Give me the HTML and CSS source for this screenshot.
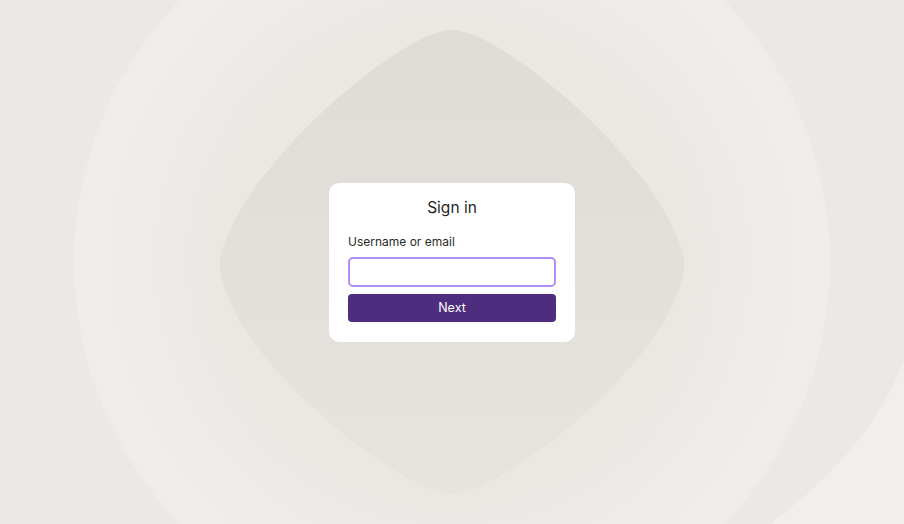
FILE: index.html
```html
<!DOCTYPE html>
<html lang="en">
<head>
    <meta charset="UTF-8">
    <meta name="viewport" content="width=device-width, initial-scale=1.0">
    <title>Sign in</title>
    <link rel="stylesheet" href="styles.css">
</head>
<body>
    <svg class="backdrop" viewBox="0 0 904 524" preserveAspectRatio="none" aria-hidden="true">
        <defs>
            <radialGradient id="ring" cx="452" cy="262" r="390" gradientUnits="userSpaceOnUse">
                <stop offset="0.6" stop-color="#ebe8e4"/>
                <stop offset="0.93" stop-color="#f0eeeb"/>
                <stop offset="1" stop-color="#eeece9"/>
            </radialGradient>
            <linearGradient id="diamond" x1="0" y1="0" x2="0" y2="1">
                <stop offset="0" stop-color="#dfdbd7"/>
                <stop offset="1" stop-color="#e7e4e0"/>
            </linearGradient>
        </defs>
        <rect width="904" height="524" fill="#ebe9e5"/>
        <circle cx="452" cy="262" r="378" fill="url(#ring)"/>
        <path d="M 770 524 Q 870 450 904 360 L 904 524 Z" fill="#f1efec"/>
        <path d="M 452 30 C 400 30 232 175 220 262 C 220 350 400 494 452 494 C 504 494 684 350 684 262 C 672 175 504 30 452 30 Z" fill="url(#diamond)"/>
    </svg>

    <div class="card">
        <h1>Sign in</h1>
        <label for="login">Username or email</label>
        <input type="text" id="login">
        <button>Next</button>
    </div>
</body>
</html>
```

FILE: styles.css
```css
body {
    display: flex;
    justify-content: center;
    align-items: center;
    height: 100vh;
    margin: 0;
    font-family: Inter, "Noto Sans", sans-serif;
    background-color: #ebe9e5;
    overflow: hidden;
}
.backdrop {
    position: fixed;
    top: 0;
    left: 0;
    width: 100%;
    height: 100%;
    z-index: 0;
}
.card {
    position: relative;
    z-index: 1;
    width: 208px;
    padding: 15px 19px 20px;
    background: #fff;
    border-radius: 10px;
    display: flex;
    flex-direction: column;
}
h1 {
    margin: 0 0 17px;
    font-size: 15.5px;
    font-weight: 400;
    text-align: center;
    color: #1f1f1f;
}
label {
    font-size: 12px;
    color: #2a2a2a;
    margin-bottom: 8px;
}
input[type="text"] {
    box-sizing: border-box;
    width: 100%;
    height: 30px;
    padding: 0 8px;
    border: 2px solid #b48ef7;
    border-radius: 5px;
    outline: none;
    font: inherit;
}
button {
    margin-top: 7px;
    height: 28px;
    background: #4e2d7e;
    color: #fff;
    border: none;
    border-radius: 4px;
    font-family: inherit;
    font-size: 12.5px;
    cursor: pointer;
}
```
